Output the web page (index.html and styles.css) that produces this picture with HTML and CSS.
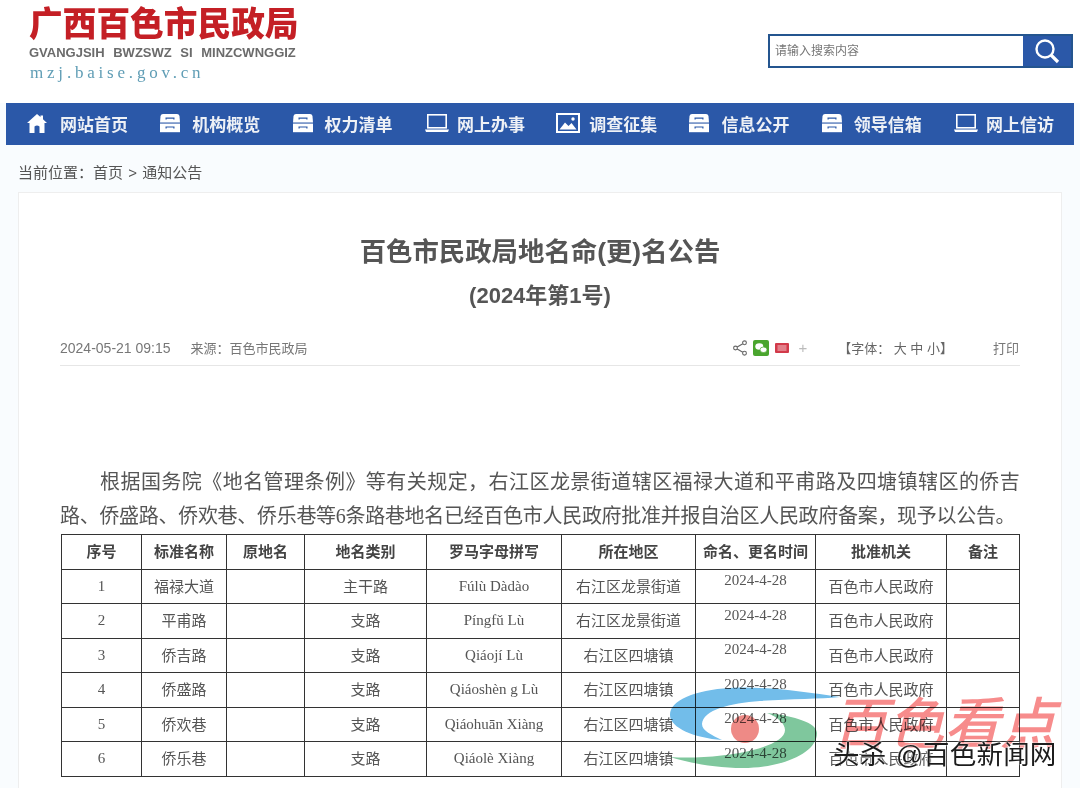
FILE: index.html
```html
<!DOCTYPE html>
<html lang="zh-CN">
<head>
    <meta charset="UTF-8">
    <meta name="viewport" content="width=device-width, initial-scale=1.0">
    <title>百色市民政局地名命(更)名公告</title>
    <link rel="stylesheet" href="styles.css">
</head>
<body>
    <svg class="defs" width="0" height="0">
        <symbol id="i-home" viewBox="0 0 20 20">
            <path fill-rule="evenodd" d="M10 1 L13.5 4 V2.5 H16 V6.2 L20 10 H17.5 V20 H2.5 V10 H0 Z M7.5 20 V13.5 Q10 11.5 12.5 13.5 V20 Z" fill="#fff"/>
        </symbol>
        <symbol id="i-box" viewBox="0 0 22 20">
            <path d="M4 1 H18 Q20 1 20.5 3 L21 9.4 H1 L1.5 3 Q2 1 4 1 Z" fill="#fff"/>
            <rect x="1" y="10.6" width="20" height="8.6" fill="#fff"/>
            <path d="M6.5 4.6 H15.5 V6.6 H14.3 V5.8 H7.7 V6.6 H6.5 Z M6.5 13.4 H15.5 V15.4 H14.3 V14.6 H7.7 V15.4 H6.5 Z" fill="#2b58a8"/>
        </symbol>
        <symbol id="i-laptop" viewBox="0 0 26 20">
            <rect x="3.8" y="1.8" width="18.4" height="13" fill="none" stroke="#fff" stroke-width="1.6"/>
            <path d="M1 16.6 H25 L24 19 H2 Z" fill="#fff"/>
        </symbol>
        <symbol id="i-image" viewBox="0 0 24 20">
            <rect x="1" y="1" width="22" height="18" fill="none" stroke="#fff" stroke-width="2"/>
            <path d="M3.5 16.5 L9 9.5 L12.5 13 L15.5 10 L20.5 16.5 Z" fill="#fff"/>
            <circle cx="17" cy="6" r="1.7" fill="#fff"/>
        </symbol>
    </svg>

    <header class="top">
        <div class="logo">
            <div class="logo-cn">广西百色市民政局</div>
            <div class="logo-za">GVANGJSIH BWZSWZ SI MINZCWNGGIZ</div>
            <div class="logo-url">mzj.baise.gov.cn</div>
        </div>
        <div class="search">
            <span class="search-text">请输入搜索内容</span>
            <span class="search-btn">
                <svg width="26" height="26" viewBox="0 0 26 26" fill="none" stroke="#fff">
                    <circle cx="11" cy="11" r="8.5" stroke-width="2.4"/>
                    <path d="M17 17 L24 24" stroke-width="3.2"/>
                </svg>
            </span>
        </div>
    </header>

    <nav class="nav">
        <a class="nav-item"><svg class="ico ico-home" width="20" height="20"><use href="#i-home"/></svg>网站首页</a>
        <a class="nav-item"><svg class="ico" width="22" height="20"><use href="#i-box"/></svg>机构概览</a>
        <a class="nav-item"><svg class="ico" width="22" height="20"><use href="#i-box"/></svg>权力清单</a>
        <a class="nav-item"><svg class="ico ico-laptop" width="26" height="20"><use href="#i-laptop"/></svg>网上办事</a>
        <a class="nav-item"><svg class="ico ico-image" width="24" height="20"><use href="#i-image"/></svg>调查征集</a>
        <a class="nav-item"><svg class="ico" width="22" height="20"><use href="#i-box"/></svg>信息公开</a>
        <a class="nav-item"><svg class="ico" width="22" height="20"><use href="#i-box"/></svg>领导信箱</a>
        <a class="nav-item"><svg class="ico ico-laptop" width="26" height="20"><use href="#i-laptop"/></svg>网上信访</a>
    </nav>

    <div class="crumb">当前位置：<a>首页</a> &gt; <a>通知公告</a></div>

    <main class="card">
        <h1 class="title">百色市民政局地名命(更)名公告</h1>
        <h2 class="subtitle">(2024年第1号)</h2>

        <div class="meta">
            <span class="date">2024-05-21 09:15</span>
            <span class="source">来源：百色市民政局</span>
            <span class="share">
                <svg width="14" height="16" viewBox="0 0 14 16" fill="none" stroke="#666" stroke-width="1.1">
                    <circle cx="11.5" cy="2.8" r="1.9"/>
                    <circle cx="2.5" cy="8" r="1.9"/>
                    <circle cx="11.5" cy="13.2" r="1.9"/>
                    <path d="M4.2 7 L9.8 3.7 M4.2 9 L9.8 12.3"/>
                </svg>
                <svg width="16" height="16" viewBox="0 0 16 16">
                    <rect width="16" height="16" rx="2" fill="#4aa52e"/>
                    <ellipse cx="6.3" cy="6.5" rx="4" ry="3.3" fill="#fff"/>
                    <ellipse cx="10.5" cy="9.8" rx="3.5" ry="2.8" fill="#fff" stroke="#4aa52e" stroke-width=".7"/>
                </svg>
                <svg width="14" height="10" viewBox="0 0 14 10">
                    <rect width="14" height="10" rx="1" fill="#d23a4a"/>
                    <path d="M2.5 3 H11.5 M2.5 5 H11.5 M2.5 7 H11.5" stroke="#f3c6ca" stroke-width="1"/>
                </svg>
                <span class="plus">+</span>
            </span>
            <span class="font-size">【字体： 大 中 小】</span>
            <span class="print">打印</span>
        </div>

        <p class="para"><span class="para-first">根据国务院《地名管理条例》等有关规定，右江区龙景街道辖区福禄大道和平甫路及四塘镇辖区的侨吉</span><br>路、侨盛路、侨欢巷、侨乐巷等<span class="num">6</span>条路巷地名已经百色市人民政府批准并报自治区人民政府备案，现予以公告。</p>

        <table class="tbl">
            <colgroup>
                <col class="c1"><col class="c2"><col class="c3"><col class="c4"><col class="c5">
                <col class="c6"><col class="c7"><col class="c8"><col class="c9">
            </colgroup>
            <thead>
                <tr>
                    <th>序号</th><th>标准名称</th><th>原地名</th><th>地名类别</th><th>罗马字母拼写</th>
                    <th>所在地区</th><th>命名、更名时间</th><th>批准机关</th><th>备注</th>
                </tr>
            </thead>
            <tbody>
                <tr>
                    <td class="latin">1</td><td>福禄大道</td><td></td><td>主干路</td><td class="latin">Fúlù Dàdào</td>
                    <td>右江区龙景街道</td><td class="latin day">2024-4-28</td><td>百色市人民政府</td><td></td>
                </tr>
                <tr>
                    <td class="latin">2</td><td>平甫路</td><td></td><td>支路</td><td class="latin">Píngfǔ Lù</td>
                    <td>右江区龙景街道</td><td class="latin day">2024-4-28</td><td>百色市人民政府</td><td></td>
                </tr>
                <tr>
                    <td class="latin">3</td><td>侨吉路</td><td></td><td>支路</td><td class="latin">Qiáojí Lù</td>
                    <td>右江区四塘镇</td><td class="latin day">2024-4-28</td><td>百色市人民政府</td><td></td>
                </tr>
                <tr>
                    <td class="latin">4</td><td>侨盛路</td><td></td><td>支路</td><td class="latin">Qiáoshèn g Lù</td>
                    <td>右江区四塘镇</td><td class="latin day">2024-4-28</td><td>百色市人民政府</td><td></td>
                </tr>
                <tr>
                    <td class="latin">5</td><td>侨欢巷</td><td></td><td>支路</td><td class="latin">Qiáohuān Xiàng</td>
                    <td>右江区四塘镇</td><td class="latin day">2024-4-28</td><td>百色市人民政府</td><td></td>
                </tr>
                <tr>
                    <td class="latin">6</td><td>侨乐巷</td><td></td><td>支路</td><td class="latin">Qiáolè Xiàng</td>
                    <td>右江区四塘镇</td><td class="latin day">2024-4-28</td><td>百色市人民政府</td><td></td>
                </tr>
            </tbody>
        </table>
    </main>

    <!-- watermark sits over the table -->
    <svg class="wm-logo" width="180" height="90" viewBox="0 0 180 90">
        <path d="M170 11 C130 5 90 0 60 2 C25 4 0 14 0 29 C0 42 25 52 52 54 C42 49 32 45 32 38 C33 24 60 17 90 15 C120 13 150 13 170 11 Z" fill="#72bdea"/>
        <path d="M0 71 C25 73 60 70 83 64 C103 59 115 52 115 44 C115 37 107 31 97 27 C125 30 147 37 147 47 C147 68 110 82 73 82 C45 82 20 77 0 71 Z" fill="#7fc79d"/>
        <circle cx="75" cy="43" r="14" fill="#ee8a86"/>
    </svg>
    <div class="wm-red">百色看点</div>
    <div class="wm-black">头杀 @百色新闻网</div>
</body>
</html>
```

FILE: styles.css
```css
* {
    box-sizing: border-box;
}
html, body {
    margin: 0;
    padding: 0;
}
body {
    position: relative;
    height: 788px;
    overflow: hidden;
    background: #f9fcfe;
    color: #555;
    font-family: "Liberation Sans", "Noto Sans CJK SC", sans-serif;
}
.defs {
    position: absolute;
}
.top {
    display: flex;
    justify-content: space-between;
    align-items: flex-start;
    height: 103px;
    padding: 0 7px 0 29px;
    background: #fff;
}
.logo-cn {
    margin-top: 3px;
    font-size: 33.7px;
    line-height: 42px;
    font-weight: 900;
    color: #c41f25;
    white-space: nowrap;
}
.logo-za {
    font-size: 13px;
    line-height: 16px;
    font-weight: 700;
    color: #6b6b6b;
    word-spacing: 5px;
    white-space: nowrap;
}
.logo-url {
    margin-top: 2px;
    padding-left: 1px;
    font-family: "Liberation Serif", serif;
    font-size: 17px;
    line-height: 20px;
    letter-spacing: 3.8px;
    color: #5f9db5;
}
.search {
    display: flex;
    width: 305px;
    height: 34px;
    margin-top: 34px;
    border: 2px solid #24558f;
    background: #fff;
}
.search-text {
    flex: 1;
    padding-left: 5px;
    font-size: 12px;
    line-height: 30px;
    color: #777;
}
.search-btn {
    display: flex;
    align-items: center;
    justify-content: center;
    width: 48px;
    background: #2b58a8;
}
.nav {
    display: flex;
    height: 42px;
    margin: 0 6px;
    padding: 0 0 2px 21px;
    background: #2b58a8;
}
.nav-item {
    display: flex;
    align-items: center;
    flex: 0 0 132.3px;
    font-size: 17px;
    font-weight: 700;
    color: #eef1f6;
    white-space: nowrap;
}
.ico {
    margin-right: 11px;
}
.ico-home {
    margin-right: 13px;
}
.ico-laptop {
    margin-right: 7px;
}
.ico-image {
    margin-right: 9px;
}
.crumb {
    height: 47px;
    padding: 18px 0 0 18px;
    font-size: 15px;
    line-height: 20px;
    word-spacing: 1px;
    color: #555;
}
.card {
    height: 620px;
    margin: 0 18px;
    padding: 0 41px;
    border: 1px solid #eee;
    border-bottom: none;
    background: #fff;
}
.title {
    margin: 40px 0 0;
    font-size: 26.4px;
    line-height: 38px;
    font-weight: 700;
    color: #555;
    text-align: center;
}
.subtitle {
    margin: 11px 0 0;
    font-size: 22px;
    line-height: 28px;
    font-weight: 700;
    color: #555;
    text-align: center;
}
.meta {
    display: flex;
    align-items: center;
    height: 36px;
    margin-top: 20px;
    border-bottom: 1px solid #e6e6e6;
    font-size: 13px;
    color: #777;
}
.date {
    font-size: 14px;
}
.source {
    margin-left: 20px;
}
.share {
    display: flex;
    align-items: center;
    gap: 6px;
    margin-left: auto;
}
.plus {
    margin-left: 3px;
    font-size: 15px;
    color: #bbb;
}
.font-size {
    margin-left: 31px;
    color: #666;
}
.print {
    margin: 0 1px 0 40px;
}
.para {
    margin: 99px 0 1px;
    font-size: 20px;
    line-height: 34px;
    letter-spacing: -.3px;
    text-indent: 40px;
    white-space: nowrap;
    color: #555;
}
.para-first {
    letter-spacing: .45px;
}
.num {
    font-family: "Liberation Serif", serif;
}
.tbl {
    width: 958px;
    margin-left: 1px;
    table-layout: fixed;
    border-collapse: collapse;
    font-size: 15px;
    color: #555;
}
.tbl th, .tbl td {
    height: 34.5px;
    padding: 0 0 2px;
    border: 1px solid #333;
    text-align: center;
    white-space: nowrap;
}
.tbl th {
    font-weight: 700;
    color: #444;
}
.tbl td.latin {
    padding-bottom: 0;
    font-family: "Liberation Serif", serif;
    font-size: 15px;
}
.tbl td.day {
    padding-bottom: 11px;
}
.c1 { width: 80px; }
.c2 { width: 85px; }
.c3 { width: 78px; }
.c4 { width: 122px; }
.c5 { width: 135px; }
.c6 { width: 134px; }
.c7 { width: 120px; }
.c8 { width: 131px; }
.c9 { width: 73px; }
.wm-logo {
    position: absolute;
    left: 670px;
    top: 686px;
    mix-blend-mode: multiply;
}
.wm-red {
    position: absolute;
    left: 832px;
    top: 693px;
    font-size: 56px;
    line-height: 64px;
    font-weight: 500;
    font-style: italic;
    color: #f78c8c;
    mix-blend-mode: multiply;
    white-space: nowrap;
}
.wm-black {
    position: absolute;
    left: 833px;
    top: 737px;
    font-size: 26.5px;
    line-height: 36px;
    letter-spacing: .2px;
    word-spacing: 2px;
    color: #1d1d1d;
    text-shadow: 0 0 2px #fff, 0 0 2px #fff;
    white-space: nowrap;
}
```
